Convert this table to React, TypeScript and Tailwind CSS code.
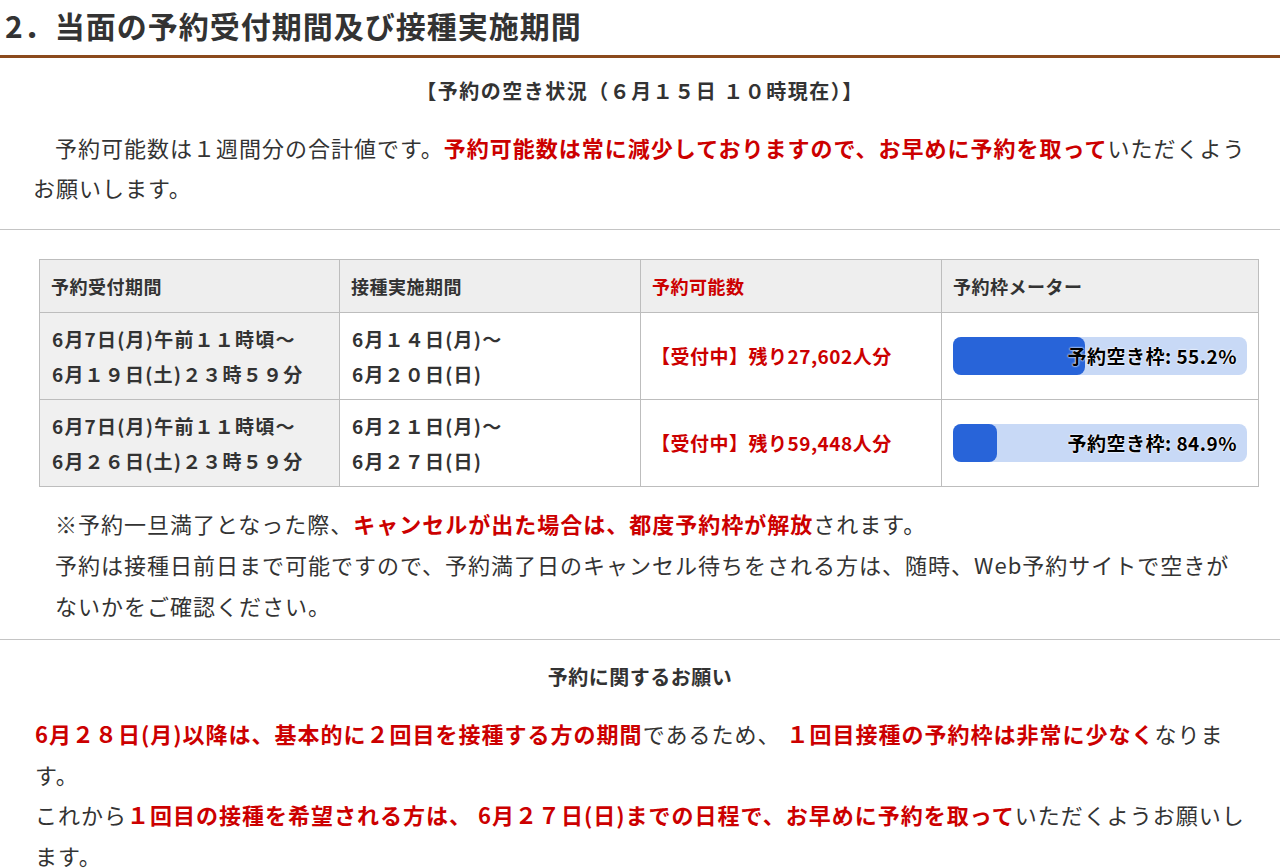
const rows = [
  {
    accept: ["6月7日(月)午前１１時頃～", "6月１９日(土)２３時５９分"],
    period: ["6月１４日(月)～", "6月２０日(日)"],
    remain: "【受付中】残り27,602人分",
    free: 55.2,
  },
  {
    accept: ["6月7日(月)午前１１時頃～", "6月２６日(土)２３時５９分"],
    period: ["6月２１日(月)～", "6月２７日(日)"],
    remain: "【受付中】残り59,448人分",
    free: 84.9,
  },
];

function Meter({ free }: { free: number }) {
  return (
    <div className="relative h-[38px] w-full rounded-[8px] bg-[#c8d9f6]">
      <div className="h-full rounded-[8px] bg-[#2864d9]" style={{ width: `${100 - free}%` }} />
      <span className="absolute inset-y-0 right-[10px] flex items-center text-[19px] font-bold tracking-[0.5px] text-black [text-shadow:0_0_2px_#fff,0_0_2px_#fff]">
        予約空き枠: {free}%
      </span>
    </div>
  );
}

export default function App() {
  return (
    <div className="w-[1280px] bg-white pb-[20px] font-['Noto_Sans_CJK_JP','Noto_Sans',sans-serif] text-[#333]">
      <h2 className="h-[58px] border-b-[3px] border-[#8b4a1c] pl-[5px] text-[30px] font-bold leading-[50px] tracking-[1px] text-[#333]">
        2．当面の予約受付期間及び接種実施期間
      </h2>

      <p className="mt-[13px] text-center text-[20px] font-bold leading-[40px] tracking-[1.5px]">
        【予約の空き状況（６月１５日 １０時現在）】
      </p>

      <p className="mt-[16px] pl-[33px] pr-[30px] indent-[22px] text-[22px] leading-[40px] tracking-[1px]">
        予約可能数は１週間分の合計値です。
        <span className="font-bold text-[#cc0000]">予約可能数は常に減少しておりますので、お早めに予約を取って</span>
        いただくようお願いします。
      </p>

      <hr className="mt-[22px] border-t border-[#c4c4c4]" />

      <div className="mt-[29px] pl-[39px] pr-[21px]">
        <table className="w-full table-fixed border-collapse text-[18px] font-bold tracking-[0.5px]">
          <colgroup>
            <col className="w-[300px]" />
            <col className="w-[301px]" />
            <col className="w-[301px]" />
            <col />
          </colgroup>
          <thead>
            <tr className="h-[53px] bg-[#eeeeee] text-left">
              <th className="border border-[#bdbdbd] px-[11px] font-bold">予約受付期間</th>
              <th className="border border-[#bdbdbd] px-[11px] font-bold">接種実施期間</th>
              <th className="border border-[#bdbdbd] px-[11px] font-bold text-[#cc0000]">予約可能数</th>
              <th className="border border-[#bdbdbd] px-[11px] font-bold">予約枠メーター</th>
            </tr>
          </thead>
          <tbody className="text-[19px] tracking-[1.2px]">
            {rows.map((r, i) => (
              <tr key={i} className="h-[87px]">
                <td className="border border-[#bdbdbd] bg-[#f0f0f0] px-[12px] leading-[35px]">
                  {r.accept[0]}
                  <br />
                  {r.accept[1]}
                </td>
                <td className="border border-[#bdbdbd] px-[12px] leading-[35px]">
                  {r.period[0]}
                  <br />
                  {r.period[1]}
                </td>
                <td className="border border-[#bdbdbd] px-[10px] tracking-[0.5px] text-[#cc0000]">{r.remain}</td>
                <td className="border border-[#bdbdbd] px-[11px]">
                  <Meter free={r.free} />
                </td>
              </tr>
            ))}
          </tbody>
        </table>
      </div>

      <div className="mt-[16px] pl-[55px] pr-[40px] text-[22px] leading-[41px] tracking-[1px]">
        <p>
          ※予約一旦満了となった際、
          <span className="font-bold text-[#cc0000]">キャンセルが出た場合は、都度予約枠が解放</span>
          されます。
        </p>
        <p>予約は接種日前日まで可能ですので、予約満了日のキャンセル待ちをされる方は、随時、Web予約サイトで空きがないかをご確認ください。</p>
      </div>

      <hr className="mt-[13px] border-t border-[#c4c4c4]" />

      <p className="mt-[17px] text-center text-[20px] font-bold leading-[40px] tracking-[0.5px]">予約に関するお願い</p>

      <div className="mt-[16px] pl-[35px] pr-[22px] text-[22px] leading-[40.5px] tracking-[1px]">
        <p>
          <span className="font-bold text-[#cc0000]">6月２８日(月)以降は、基本的に２回目を接種する方の期間</span>
          であるため、
          <span className="font-bold text-[#cc0000]"> １回目接種の予約枠は非常に少なく</span>
          なります。
        </p>
        <p>
          これから
          <span className="font-bold text-[#cc0000]">１回目の接種を希望される方は、 6月２７日(日)までの日程で、お早めに予約を取って</span>
          いただくようお願いします。
        </p>
      </div>
    </div>
  );
}
